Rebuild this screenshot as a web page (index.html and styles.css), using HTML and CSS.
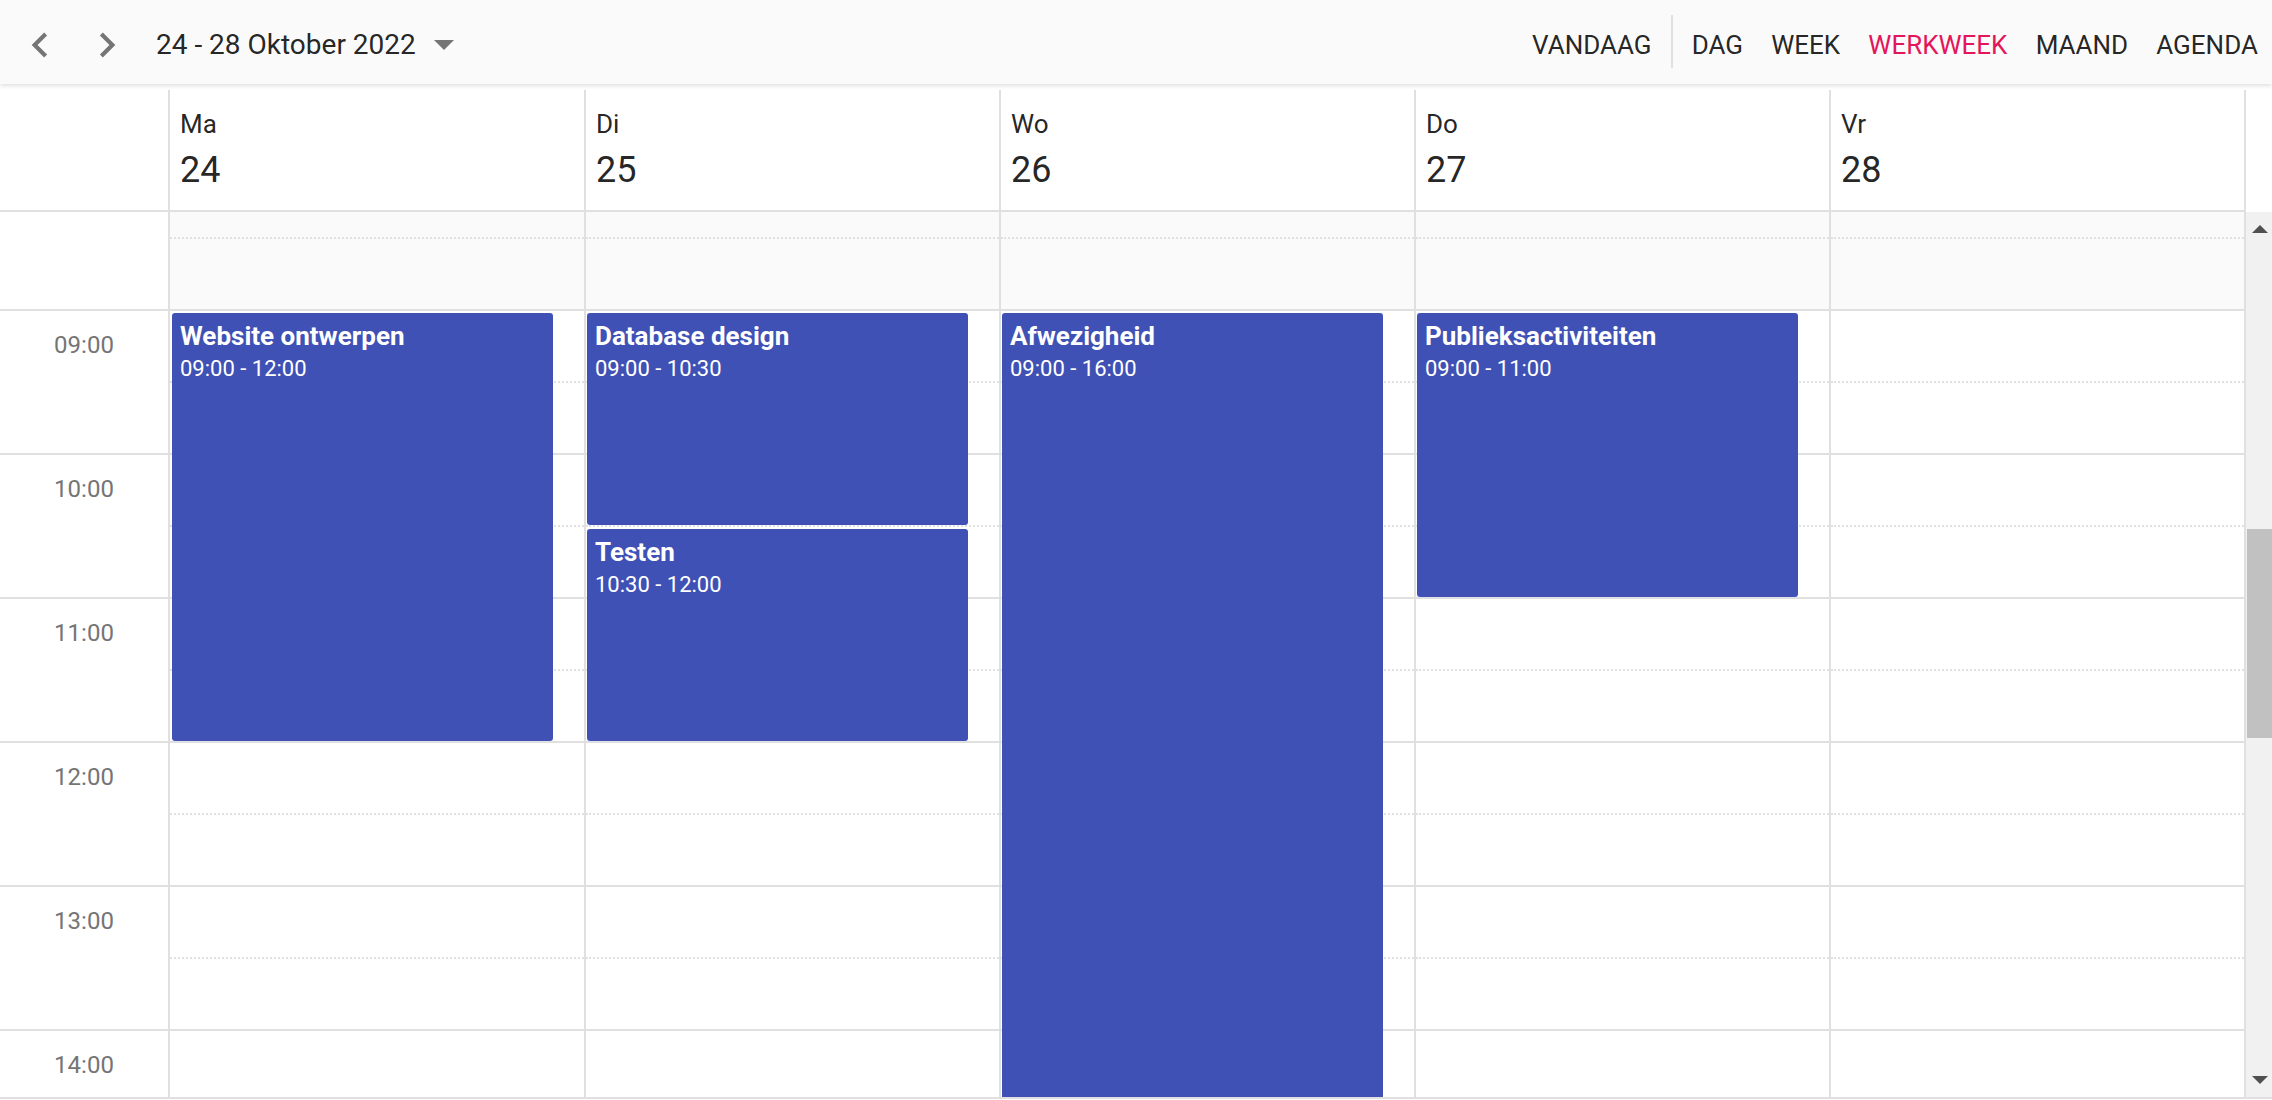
FILE: index.html
```html
<!DOCTYPE html>
<html lang="nl">
<head>
<meta charset="utf-8">
<title>Planner</title>
<link rel="stylesheet" href="styles.css">
</head>
<body>
<div class="toolbar">
  <svg class="nav" viewBox="0 0 24 24" width="50" height="50"><path d="M15.41 7.41L14 6l-6 6 6 6 1.41-1.41L10.83 12z"/></svg>
  <svg class="nav next" viewBox="0 0 24 24" width="50" height="50"><path d="M10 6L8.59 7.41 13.17 12l-4.58 4.59L10 18l6-6z"/></svg>
  <div class="range">
    <span>24 - 28 Oktober 2022</span>
    <svg class="caret" viewBox="0 0 20 10" width="20" height="10"><polygon points="0,0 20,0 10,10"/></svg>
  </div>
  <div class="tb-right">
    <span class="tb-btn">VANDAAG</span>
    <span class="sep"></span>
    <span class="tb-btn">DAG</span>
    <span class="tb-btn">WEEK</span>
    <span class="tb-btn active">WERKWEEK</span>
    <span class="tb-btn">MAAND</span>
    <span class="tb-btn">AGENDA</span>
  </div>
</div>

<div class="schedule">
  <div class="header">
    <div class="corner"></div>
    <div class="day-head mon"><div class="dname">Ma</div><div class="dnum">24</div></div>
    <div class="day-head"><div class="dname">Di</div><div class="dnum">25</div></div>
    <div class="day-head"><div class="dname">Wo</div><div class="dnum">26</div></div>
    <div class="day-head"><div class="dname">Do</div><div class="dnum">27</div></div>
    <div class="day-head"><div class="dname">Vr</div><div class="dnum">28</div></div>
    <div class="head-fill"></div>
  </div>
  <div class="body">
    <div class="viewport">
      <div class="grid">
        <div class="times">
          <div class="hour"></div>
          <div class="hour">09:00</div>
          <div class="hour">10:00</div>
          <div class="hour">11:00</div>
          <div class="hour">12:00</div>
          <div class="hour">13:00</div>
          <div class="hour">14:00</div>
        </div>

        <div class="day mon">
          <div class="slot half off"></div><div class="slot off"></div>
          <div class="slot half"></div><div class="slot"></div>
          <div class="slot half"></div><div class="slot"></div>
          <div class="slot half"></div><div class="slot"></div>
          <div class="slot half"></div><div class="slot"></div>
          <div class="slot half"></div><div class="slot"></div>
          <div class="slot half"></div><div class="slot"></div>
          <div class="appt" style="top:146px;height:428px"><div class="appt-title">Website ontwerpen</div><div class="appt-time">09:00 - 12:00</div></div>
        </div>

        <div class="day">
          <div class="slot half off"></div><div class="slot off"></div>
          <div class="slot half"></div><div class="slot"></div>
          <div class="slot half"></div><div class="slot"></div>
          <div class="slot half"></div><div class="slot"></div>
          <div class="slot half"></div><div class="slot"></div>
          <div class="slot half"></div><div class="slot"></div>
          <div class="slot half"></div><div class="slot"></div>
          <div class="appt" style="top:146px;height:212px"><div class="appt-title">Database design</div><div class="appt-time">09:00 - 10:30</div></div>
          <div class="appt" style="top:362px;height:212px"><div class="appt-title">Testen</div><div class="appt-time">10:30 - 12:00</div></div>
        </div>

        <div class="day">
          <div class="slot half off"></div><div class="slot off"></div>
          <div class="slot half"></div><div class="slot"></div>
          <div class="slot half"></div><div class="slot"></div>
          <div class="slot half"></div><div class="slot"></div>
          <div class="slot half"></div><div class="slot"></div>
          <div class="slot half"></div><div class="slot"></div>
          <div class="slot half"></div><div class="slot"></div>
          <div class="appt" style="top:146px;height:860px"><div class="appt-title">Afwezigheid</div><div class="appt-time">09:00 - 16:00</div></div>
        </div>

        <div class="day">
          <div class="slot half off"></div><div class="slot off"></div>
          <div class="slot half"></div><div class="slot"></div>
          <div class="slot half"></div><div class="slot"></div>
          <div class="slot half"></div><div class="slot"></div>
          <div class="slot half"></div><div class="slot"></div>
          <div class="slot half"></div><div class="slot"></div>
          <div class="slot half"></div><div class="slot"></div>
          <div class="appt" style="top:146px;height:284px"><div class="appt-title">Publieksactiviteiten</div><div class="appt-time">09:00 - 11:00</div></div>
        </div>

        <div class="day">
          <div class="slot half off"></div><div class="slot off"></div>
          <div class="slot half"></div><div class="slot"></div>
          <div class="slot half"></div><div class="slot"></div>
          <div class="slot half"></div><div class="slot"></div>
          <div class="slot half"></div><div class="slot"></div>
          <div class="slot half"></div><div class="slot"></div>
          <div class="slot half"></div><div class="slot"></div>
        </div>
      </div>
    </div>
    <div class="scrollbar">
      <div class="sb-btn"><svg viewBox="0 0 16 8" width="16" height="8"><polygon points="0,8 8,0 16,8"/></svg></div>
      <div class="sb-track"><div class="thumb"></div></div>
      <div class="sb-btn"><svg viewBox="0 0 16 8" width="16" height="8"><polygon points="0,0 16,0 8,8"/></svg></div>
    </div>
  </div>
</div>
</body>
</html>
```

FILE: styles.css
```css
* { box-sizing: border-box; }

body {
  margin: 0;
  width: 2272px;
  height: 1100px;
  overflow: hidden;
  background: #fff;
  color: rgba(0, 0, 0, 0.87);
  font-family: Roboto, "Noto Sans", sans-serif;
}

/* toolbar */
.toolbar {
  position: relative;
  z-index: 2;
  height: 84px;
  padding: 6px 0 0 15px;
  display: flex;
  align-items: center;
  background: #fafafa;
  box-shadow: 0 2px 4px rgba(0, 0, 0, 0.12);
}

.nav { display: block; fill: #757575; }
.nav.next { margin-left: 17px; }

.range {
  margin-left: 24px;
  display: flex;
  align-items: center;
  font-size: 28px;
  line-height: 34px;
  color: rgba(0, 0, 0, 0.87);
}

.caret { display: block; margin-left: 18px; fill: #757575; }

.tb-right {
  margin-left: auto;
  display: flex;
  align-items: center;
}

.tb-btn {
  padding: 0 14.1px;
  font-size: 26px;
  line-height: 34px;
  color: rgba(0, 0, 0, 0.87);
}

.tb-btn.active { color: #e3165b; }

.sep {
  width: 2px;
  height: 53px;
  margin: 0 5px 7px;
  background: #e0e0e0;
}

/* schedule */
.schedule {
  margin-top: 6px;
  border-bottom: 2px solid #e0e0e0;
}

.header {
  display: flex;
  height: 122px;
}

.corner {
  width: 170px;
  border-right: 2px solid #e0e0e0;
  border-bottom: 2px solid #e0e0e0;
}

.day-head {
  width: 415px;
  padding: 18.6px 0 0 10px;
  border-right: 2px solid #e0e0e0;
  border-bottom: 2px solid #e0e0e0;
}

.day-head.mon { width: 416px; }

.dname { font-size: 26px; line-height: 30px; }
.dnum { margin-top: 9px; font-size: 36px; line-height: 44px; }

.head-fill { flex: 1; }

.body {
  display: flex;
  height: 885px;
}

.viewport {
  width: 2246px;
  height: 885px;
  overflow: hidden;
}

.grid {
  display: flex;
  margin-top: -45px;
}

.times {
  width: 170px;
  border-right: 2px solid #e0e0e0;
}

.hour {
  height: 144px;
  padding-top: 20px;
  border-bottom: 2px solid #e0e0e0;
  text-align: center;
  font-size: 24px;
  line-height: 28px;
  color: #757575;
}

.day {
  position: relative;
  width: 415px;
  border-right: 2px solid #e0e0e0;
}

.day.mon { width: 416px; }

.slot {
  height: 72px;
  border-bottom: 2px solid #e0e0e0;
}

.slot.half { border-bottom-style: dotted; }
.slot.off { background: #fafafa; }

.appt {
  position: absolute;
  left: 1px;
  right: 31px;
  padding: 8px 8px 0;
  overflow: hidden;
  border-radius: 3px;
  background: #3f51b5;
  color: #fff;
}

.day.mon .appt { left: 2px; }

.appt-title {
  font-size: 26px;
  font-weight: 700;
  line-height: 30px;
  white-space: nowrap;
}

.appt-time {
  font-size: 22px;
  line-height: 36px;
  white-space: nowrap;
}

/* scrollbar */
.scrollbar {
  width: 26px;
  display: flex;
  flex-direction: column;
  background: #f1f1f1;
}

.sb-btn {
  height: 34px;
  display: flex;
  align-items: center;
  justify-content: center;
  fill: #505050;
}

.sb-btn svg { display: block; margin-left: 1px; }

.sb-track { flex: 1; }

.thumb {
  height: 209px;
  margin: 283px 0 0 1px;
  background: #c1c1c1;
}
```
